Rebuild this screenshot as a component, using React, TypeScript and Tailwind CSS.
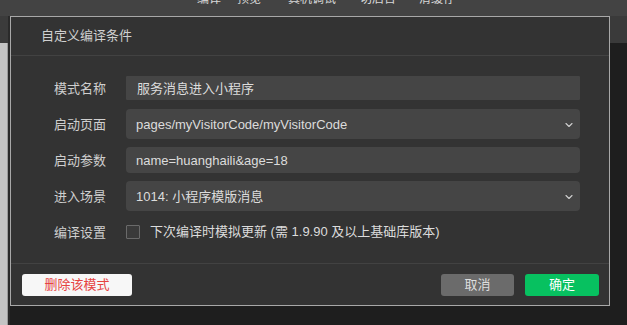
import React from "react";
import { ChevronDown } from "lucide-react";

const font = { fontFamily: '"Liberation Sans", "Noto Sans CJK SC", sans-serif' };

function Row({ label, children, h }: { label: string; children: React.ReactNode; h: string }) {
  return (
    <div className={`flex items-center ${h}`}>
      <div className="w-[72px] shrink-0 text-[13px] text-[#cfcfcf] pt-[1px]">{label}</div>
      <div className="flex-1 h-full">{children}</div>
    </div>
  );
}

export default function App() {
  const menu = [
    { t: "编译", m: "ml-[197px]" },
    { t: "预览", m: "ml-[16px]" },
    { t: "真机调试", m: "ml-[27px]" },
    { t: "切后台", m: "ml-[24px]" },
    { t: "清缓存", m: "ml-[23px]" },
  ];

  return (
    <div className="w-[627px] h-[325px] bg-[#1e1e1e] overflow-hidden" style={font}>
      {/* top toolbar, mostly cut off */}
      <div className="h-[16px] bg-[#434343] overflow-hidden flex">
        {menu.map((x) => (
          <span key={x.t} className={`${x.m} -mt-[10px] text-[12px] leading-[18px] text-[#d8d8d8]`}>
            {x.t}
          </span>
        ))}
      </div>

      <div className="flex">
        {/* left strip */}
        <div className="w-[10px] flex">
          <div className="w-[8px] flex flex-col">
            <div className="h-[27px] bg-[#3b3b3b]" />
            <div className="h-[300px] bg-[#c4c4c4] border-r border-[#9a9a9a]" />
          </div>
          <div className="w-[2px] bg-[#2a2a2a]" />
        </div>

        {/* dialog */}
        <div className="w-[600px] h-[290px] bg-[#333333] border border-[#a8a8a8] flex flex-col">
          <div className="h-[39px] flex items-center pl-[30px] text-[13px] text-[#d0d0d0] border-b border-[#424242]">
            自定义编译条件
          </div>

          <div className="flex-1 pl-[43px] pr-[29px] pt-[20px] flex flex-col">
            <Row label="模式名称" h="h-[24px]">
              <div className="h-full bg-[#454545] rounded-[1px] flex items-center pl-[11px] pt-[1px] text-[13px] text-[#dcdcdc]">
                服务消息进入小程序
              </div>
            </Row>
            <div className="mt-[9px]">
              <Row label="启动页面" h="h-[30px]">
                <div className="h-full bg-[#454545] rounded-[4px] flex items-center pl-[10px] pr-[5px] pt-[1px] text-[13px] text-[#dcdcdc]">
                  <span className="flex-1">pages/myVisitorCode/myVisitorCode</span>
                  <ChevronDown size={12} strokeWidth={2.2} color="#d0d0d0" />
                </div>
              </Row>
            </div>
            <div className="mt-[8px]">
              <Row label="启动参数" h="h-[26px]">
                <div className="h-full bg-[#454545] rounded-[4px] flex items-center pl-[10px] pt-[1px] text-[13px] text-[#dcdcdc]">
                  name=huanghaili&amp;age=18
                </div>
              </Row>
            </div>
            <div className="mt-[8px]">
              <Row label="进入场景" h="h-[30px]">
                <div className="h-full bg-[#454545] rounded-[4px] flex items-center pl-[10px] pr-[5px] pt-[1px] text-[13px] text-[#dcdcdc]">
                  <span className="flex-1">1014: 小程序模版消息</span>
                  <ChevronDown size={12} strokeWidth={2.2} color="#d0d0d0" />
                </div>
              </Row>
            </div>
            <div className="mt-[9px]">
              <Row label="编译设置" h="h-[24px]">
                <div className="h-full flex items-center">
                  <div className="w-[14px] h-[14px] border border-[#6a6a6a] bg-[#3a3a3a] rounded-[1px]" />
                  <span className="ml-[10px] text-[13px] text-[#dcdcdc]">
                    下次编译时模拟更新 (需 1.9.90 及以上基础库版本)
                  </span>
                </div>
              </Row>
            </div>
          </div>

          <div className="h-[42px] border-t border-[#424242] flex items-center pl-[11px] pr-[10px]">
            <button className="w-[110px] h-[22px] bg-[#f7f7f7] rounded-[3px] text-[13px] text-[#e64340]">
              删除该模式
            </button>
            <div className="flex-1" />
            <button className="w-[73px] h-[22px] bg-[#6b6b6b] rounded-[3px] text-[13px] text-[#dedede]">
              取消
            </button>
            <button className="ml-[11px] w-[74px] h-[22px] bg-[#07c160] rounded-[3px] text-[13px] text-white">
              确定
            </button>
          </div>
        </div>

        {/* right area */}
        <div className="flex-1 flex flex-col">
          <div className="h-[27px] bg-[#3a3a3a]" />
          <div className="flex-1 bg-[#1e1e1e]" />
        </div>
      </div>
    </div>
  );
}
